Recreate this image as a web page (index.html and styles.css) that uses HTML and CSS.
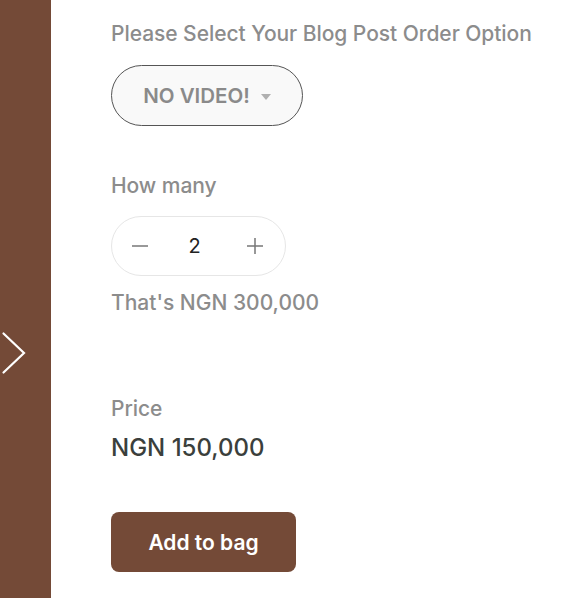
FILE: index.html
```html
<!DOCTYPE html>
<html>
<head>
<meta charset="utf-8">
<link rel="stylesheet" href="styles.css">
</head>
<body>
<div class="page">
  <aside class="sidebar">
    <svg class="chev" width="26" height="44" viewBox="0 0 26 44"><path d="M3.5 2.5 L24 22 L3.5 41.5" fill="none" stroke="#fff" stroke-width="2.2" stroke-linecap="round"/></svg>
  </aside>
  <main class="main">
    <div class="label">Please Select Your Blog Post Order Option</div>
    <div class="select">
      <span class="select-text">NO VIDEO!</span>
      <svg class="caret" width="10" height="6" viewBox="0 0 10 6"><path d="M0 0 H10 L5 6 Z" fill="#b0b0b0"/></svg>
    </div>
    <div class="label qty-label">How many</div>
    <div class="qty">
      <svg class="qbtn" width="18" height="18" viewBox="0 0 18 18"><path d="M1 9 H17" stroke="#777" stroke-width="1.5"/></svg>
      <span class="qval">2</span>
      <svg class="qbtn" width="18" height="18" viewBox="0 0 18 18"><path d="M1 9 H17 M9 1 V17" stroke="#777" stroke-width="1.5"/></svg>
    </div>
    <div class="total">That's NGN 300,000</div>
    <div class="label price-label">Price</div>
    <div class="price">NGN 150,000</div>
    <button class="add">Add to bag</button>
  </main>
</div>
</body>
</html>
```
FILE: styles.css
```css
html, body {
  margin: 0;
  padding: 0;
  background: #fff;
}
body {
  font-family: Inter, "Liberation Sans", sans-serif;
}
.page {
  display: flex;
  height: 598px;
  overflow: hidden;
}
.sidebar {
  width: 51px;
  flex: none;
  background: #744a37;
  display: flex;
  align-items: flex-start;
  padding-top: 331px;
  box-sizing: border-box;
}
.chev {
  margin-left: 0;
}
.main {
  padding-left: 60px;
  padding-top: 22px;
  display: flex;
  flex-direction: column;
  align-items: flex-start;
}
.label {
  font-size: 21px;
  line-height: 24px;
  font-weight: 500;
  color: #8c8c8c;
  letter-spacing: -0.05px;
}
.select {
  margin-top: 19px;
  width: 190px;
  height: 59px;
  border: 1px solid #555;
  border-radius: 31px;
  background: #f9f9f9;
  display: flex;
  align-items: center;
  justify-content: center;
  gap: 11px;
  box-sizing: content-box;
}
.select-text {
  font-size: 20.5px;
  font-weight: 600;
  color: #8a8a8a;
}
.caret {
  margin-top: 2px;
}
.qty-label {
  margin-top: 48px;
}
.qty {
  margin-top: 18px;
  height: 58px;
  border: 1px solid #e6e6e6;
  border-radius: 30px;
  display: flex;
  align-items: center;
  justify-content: space-between;
  padding: 0 21px 0 19px;
  box-sizing: content-box;
  width: 133px;
}
.qval {
  font-size: 20px;
  color: #222;
  margin-right: 6px;
}
.total {
  margin-top: 15px;
  font-size: 21px;
  line-height: 24px;
  font-weight: 500;
  color: #8c8c8c;
}
.price-label {
  margin-top: 82px;
}
.price {
  margin-top: 13px;
  font-size: 24px;
  line-height: 28px;
  font-weight: 500;
  color: #3b3f3c;
}
.add {
  margin-top: 50px;
  width: 185px;
  height: 60px;
  border: none;
  border-radius: 8px;
  background: #744a37;
  color: #fff;
  font-family: inherit;
  font-size: 21px;
  font-weight: 600;
}
```
